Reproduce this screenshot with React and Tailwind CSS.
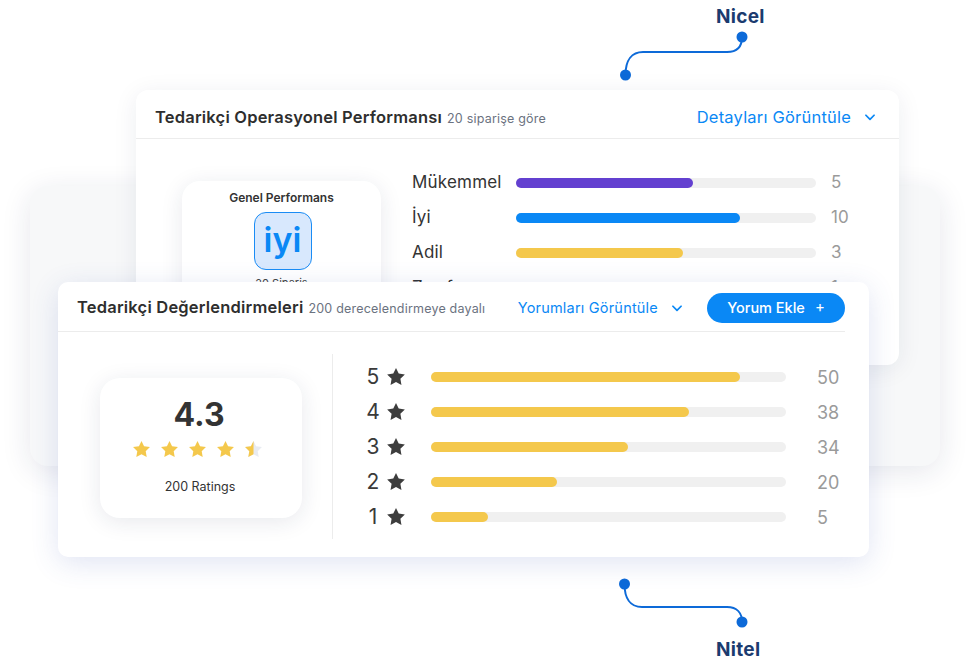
import React from "react";

const FONT = { fontFamily: "Inter, 'Noto Sans', 'Liberation Sans', sans-serif" };
const STAR = "M12 2.2l2.95 6.1 6.7.95-4.85 4.7 1.15 6.65L12 17.45 6.05 20.6 7.2 13.95 2.35 9.25l6.7-.95z";

function Star({ size = 20, color = "#f4c84c", half = false }) {
  return (
    <svg width={size} height={size} viewBox="0 0 24 24">
      {half ? (
        <>
          <defs>
            <clipPath id="lh">
              <rect x="0" y="0" width="12" height="24" />
            </clipPath>
          </defs>
          <path d={STAR} fill="#e8ebf1" />
          <path d={STAR} fill={color} clipPath="url(#lh)" />
        </>
      ) : (
        <path d={STAR} fill={color} />
      )}
    </svg>
  );
}

function Chevron() {
  return (
    <svg width="14" height="14" viewBox="0 0 24 24" fill="none" stroke="#0a88f5" strokeWidth="3" strokeLinecap="round" strokeLinejoin="round">
      <path d="M5 9l7 7 7-7" />
    </svg>
  );
}

const perf = [
  { label: "Mükemmel", pct: 59, color: "#6340d0", value: "5" },
  { label: "İyi", pct: 74.5, color: "#0a88f5", value: "10" },
  { label: "Adil", pct: 55.5, color: "#f4c84c", value: "3" },
  { label: "Zayıf", pct: 20, color: "#f4c84c", value: "1" },
];

const ratings = [
  { n: "5", pct: 87, value: "50" },
  { n: "4", pct: 72.7, value: "38" },
  { n: "3", pct: 55.5, value: "34" },
  { n: "2", pct: 35.5, value: "20" },
  { n: "1", pct: 16, value: "5" },
];

export default function App() {
  return (
    <div className="relative w-[970px] h-[663px] bg-white overflow-hidden" style={FONT}>
      {/* connectors */}
      <svg className="absolute left-0 top-0" width="970" height="663">
        <path d="M742 37 C742 47 737 52 727 52 L643 52 C632 52 625.5 60 625.5 75" fill="none" stroke="#0d6ad8" strokeWidth="2" />
        <circle cx="742" cy="37" r="5.5" fill="#0d6ad8" />
        <circle cx="625.5" cy="75" r="5.5" fill="#0d6ad8" />
        <path d="M624.5 584 C624.5 598 630 607 642 607 L727 607 C737 607 742 613 742 622" fill="none" stroke="#0d6ad8" strokeWidth="2" />
        <circle cx="624.5" cy="584" r="5.5" fill="#0d6ad8" />
        <circle cx="742" cy="622" r="5.5" fill="#0d6ad8" />
      </svg>
      <div className="absolute left-[716px] top-[3px] text-[19px] font-bold text-[#1b3b6f] tracking-[0.3px]">Nicel</div>
      <div className="absolute left-[716px] top-[636px] text-[19px] font-bold text-[#1b3b6f] tracking-[0.3px]">Nitel</div>

      {/* back card */}
      <div className="absolute left-[30px] top-[186px] w-[910px] h-[280px] rounded-[18px] bg-[#f7f8f9] shadow-[0_6px_30px_rgba(30,40,80,0.11)]" />

      {/* top card */}
      <div className="absolute left-[136px] top-[90px] w-[763px] h-[275px] rounded-[12px] bg-white shadow-[0_4px_24px_rgba(30,40,80,0.08)] flex flex-col">
        <div className="h-[49px] flex items-center justify-between pl-[19px] pr-[22px] pt-[6px] border-b border-[#ececec]">
          <div className="flex items-baseline gap-[5px]">
            <span className="text-[16.5px] font-semibold text-[#2e2e2e] tracking-[0.2px]">Tedarikçi Operasyonel Performansı</span>
            <span className="text-[12.5px] text-[#6b7280] tracking-[0.2px]">20 siparişe göre</span>
          </div>
          <div className="flex items-center gap-[12px]">
            <span className="text-[16.5px] text-[#0a88f5] tracking-[0.2px]">Detayları Görüntüle</span>
            <Chevron />
          </div>
        </div>
        <div className="flex pl-[46px] pt-[42px]">
          <div className="w-[199px] h-[140px] rounded-[18px] bg-white shadow-[0_4px_22px_rgba(30,40,80,0.10)] flex flex-col items-center pt-[8px]">
            <span className="text-[12px] font-semibold text-[#333]">Genel Performans</span>
            <div className="mt-[5px] ml-[2px] w-[58px] h-[58px] rounded-[12px] bg-[#d8e8fd] border border-[#1a8cf5] flex items-center justify-center">
              <span className="text-[34px] font-semibold text-[#0a88f5] leading-none -mt-[2px]">iyi</span>
            </div>
            <span className="mt-[5px] text-[11px] text-[#444]">20 Sipariş</span>
          </div>
          <div className="ml-[31px] -mt-[8px] flex flex-col gap-[15px]">
            {perf.map((r) => (
              <div key={r.label} className="flex items-center h-[20px]">
                <span className="w-[104px] text-[17px] text-[#333] tracking-[0.2px]">{r.label}</span>
                <div className="w-[300px] h-[10px] rounded-full bg-[#f0f0f0]">
                  <div className="h-full rounded-full" style={{ width: `${r.pct}%`, background: r.color }} />
                </div>
                <span className="ml-[15px] text-[17px] text-[#9a9a9a]">{r.value}</span>
              </div>
            ))}
          </div>
        </div>
      </div>

      {/* front card */}
      <div className="absolute left-[58px] top-[282px] w-[811px] h-[275px] rounded-[10px] bg-white shadow-[0_6px_28px_rgba(60,90,180,0.16)] flex flex-col">
        <div className="h-[50px] mr-[24px] flex items-center justify-between pl-[19px] pt-[2px] border-b border-[#ececec]">
          <div className="flex items-baseline gap-[5px]">
            <span className="text-[16.5px] font-semibold text-[#2e2e2e] tracking-[0.2px]">Tedarikçi Değerlendirmeleri</span>
            <span className="text-[12.5px] text-[#6b7280] tracking-[0.2px]">200 derecelendirmeye dayalı</span>
          </div>
          <div className="flex items-center">
            <span className="text-[14.5px] text-[#0a88f5] tracking-[0.2px]">Yorumları Görüntüle</span>
            <span className="ml-[12px]"><Chevron /></span>
            <button className="ml-[23px] h-[30px] w-[138px] rounded-full bg-[#0a88f5] text-white text-[14.5px] font-medium flex items-center justify-center gap-[10px]">
              Yorum Ekle <span className="text-[15px] font-normal">+</span>
            </button>
          </div>
        </div>
        <div className="flex flex-1 items-start pt-[22px]">
          <div className="ml-[42px] mt-[24px] w-[202px] h-[140px] rounded-[20px] bg-white shadow-[0_4px_22px_rgba(30,40,80,0.10)] flex flex-col items-center pt-[18px]">
            <span className="text-[32px] font-bold text-[#333] leading-[38px] -ml-[4px]">4.3</span>
            <div className="mt-[5px] flex gap-[7px] -ml-[8px]">
              <Star size={21} />
              <Star size={21} />
              <Star size={21} />
              <Star size={21} />
              <Star size={21} half />
            </div>
            <span className="mt-[18px] text-[12.5px] text-[#333] -ml-[2px]">200 Ratings</span>
          </div>
          <div className="ml-[30px] w-px h-[185px] bg-[#ececec]" />
          <div className="ml-[32px] mt-[12px] flex flex-col gap-[13px]">
            {ratings.map((r) => (
              <div key={r.n} className="flex items-center h-[22px]">
                <span className="w-[16px] text-[21px] text-[#3a3a3a] text-center">{r.n}</span>
                <span className="ml-[4px]"><Star size={22} color="#3d3d3d" /></span>
                <div className="ml-[24px] w-[355px] h-[10px] rounded-full bg-[#f0f0f0]">
                  <div className="h-full rounded-full bg-[#f4c84c]" style={{ width: `${r.pct}%` }} />
                </div>
                <span className="ml-[31px] text-[18px] text-[#9a9a9a]">{r.value}</span>
              </div>
            ))}
          </div>
        </div>
      </div>
    </div>
  );
}
